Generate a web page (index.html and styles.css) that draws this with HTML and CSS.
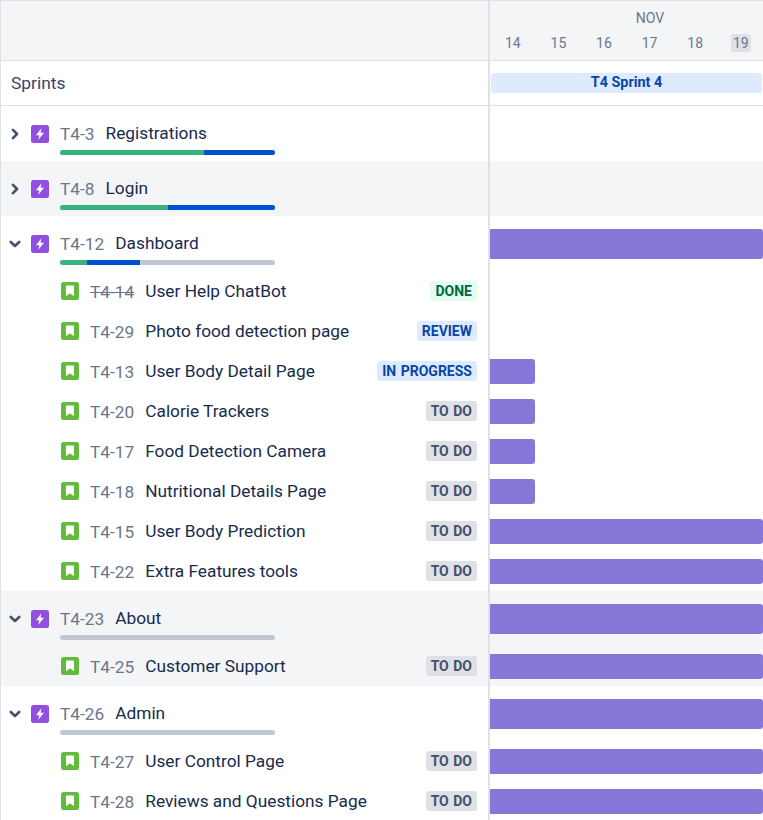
FILE: index.html
```html
<!DOCTYPE html>
<html lang="en">
<head>
  <meta charset="UTF-8">
  <title>Roadmap</title>
  <link rel="stylesheet" href="styles.css">
</head>
<body>
  <svg class="defs" width="0" height="0">
    <symbol id="epic" viewBox="0 0 18 18">
      <rect width="18" height="18" rx="2.5" fill="#904ee2"/>
      <path d="M10.4 3.2 5 10.2h3.2l-.9 4.6L13 7.8H9.6z" fill="#fff"/>
    </symbol>
    <symbol id="story" viewBox="0 0 18 18">
      <rect width="18" height="18" rx="2.5" fill="#63ba3c"/>
      <path d="M5 4.2c0-.4.3-.7.7-.7h6.6c.4 0 .7.3.7.7v10l-4-3-4 3z" fill="#fff"/>
    </symbol>
    <symbol id="open" viewBox="0 0 12 12">
      <path d="M1.8 4 6 8l4.2-4" fill="none" stroke="#42526e" stroke-width="2.6" stroke-linecap="round" stroke-linejoin="round"/>
    </symbol>
    <symbol id="closed" viewBox="0 0 12 12">
      <path d="M4 1.8 8 6l-4 4.2" fill="none" stroke="#42526e" stroke-width="2.6" stroke-linecap="round" stroke-linejoin="round"/>
    </symbol>
  </svg>

  <div class="chart">
    <!-- header -->
    <div class="row head">
      <div class="left"></div>
      <div class="right timeline">
        <div class="month">NOV</div>
        <div class="days">
          <span>14</span><span>15</span><span>16</span><span>17</span><span>18</span><span class="today">19</span>
        </div>
      </div>
    </div>

    <div class="row sprints">
      <div class="left sprints-label">Sprints</div>
      <div class="right"><div class="sprint">T4 Sprint 4</div></div>
    </div>

    <!-- epics and stories -->
    <div class="row epic">
      <div class="left">
        <svg class="toggle"><use href="#closed"/></svg>
        <svg class="icon"><use href="#epic"/></svg>
        <div class="epic-main">
          <div class="line"><span class="key">T4-3</span><span class="title">Registrations</span></div>
          <div class="progress"><i class="green w144"></i><i class="blue fill"></i></div>
        </div>
      </div>
      <div class="right"></div>
    </div>

    <div class="row epic shade">
      <div class="left">
        <svg class="toggle"><use href="#closed"/></svg>
        <svg class="icon"><use href="#epic"/></svg>
        <div class="epic-main">
          <div class="line"><span class="key">T4-8</span><span class="title">Login</span></div>
          <div class="progress"><i class="green w108"></i><i class="blue fill"></i></div>
        </div>
      </div>
      <div class="right"></div>
    </div>

    <div class="row epic">
      <div class="left">
        <svg class="toggle"><use href="#open"/></svg>
        <svg class="icon"><use href="#epic"/></svg>
        <div class="epic-main">
          <div class="line"><span class="key">T4-12</span><span class="title">Dashboard</span></div>
          <div class="progress"><i class="green w27"></i><i class="blue w53"></i></div>
        </div>
      </div>
      <div class="right"><div class="bar"></div></div>
    </div>

    <div class="row story">
      <div class="left">
        <svg class="icon"><use href="#story"/></svg>
        <span class="key done-key">T4-14</span><span class="title">User Help ChatBot</span>
        <span class="status done">DONE</span>
      </div>
      <div class="right"></div>
    </div>

    <div class="row story">
      <div class="left">
        <svg class="icon"><use href="#story"/></svg>
        <span class="key">T4-29</span><span class="title">Photo food detection page</span>
        <span class="status blue-s">REVIEW</span>
      </div>
      <div class="right"></div>
    </div>

    <div class="row story">
      <div class="left">
        <svg class="icon"><use href="#story"/></svg>
        <span class="key">T4-13</span><span class="title">User Body Detail Page</span>
        <span class="status blue-s">IN PROGRESS</span>
      </div>
      <div class="right"><div class="bar short"></div></div>
    </div>

    <div class="row story">
      <div class="left">
        <svg class="icon"><use href="#story"/></svg>
        <span class="key">T4-20</span><span class="title">Calorie Trackers</span>
        <span class="status">TO DO</span>
      </div>
      <div class="right"><div class="bar short"></div></div>
    </div>

    <div class="row story">
      <div class="left">
        <svg class="icon"><use href="#story"/></svg>
        <span class="key">T4-17</span><span class="title">Food Detection Camera</span>
        <span class="status">TO DO</span>
      </div>
      <div class="right"><div class="bar short"></div></div>
    </div>

    <div class="row story">
      <div class="left">
        <svg class="icon"><use href="#story"/></svg>
        <span class="key">T4-18</span><span class="title">Nutritional Details Page</span>
        <span class="status">TO DO</span>
      </div>
      <div class="right"><div class="bar short"></div></div>
    </div>

    <div class="row story">
      <div class="left">
        <svg class="icon"><use href="#story"/></svg>
        <span class="key">T4-15</span><span class="title">User Body Prediction</span>
        <span class="status">TO DO</span>
      </div>
      <div class="right"><div class="bar"></div></div>
    </div>

    <div class="row story">
      <div class="left">
        <svg class="icon"><use href="#story"/></svg>
        <span class="key">T4-22</span><span class="title">Extra Features tools</span>
        <span class="status">TO DO</span>
      </div>
      <div class="right"><div class="bar"></div></div>
    </div>

    <div class="row epic shade">
      <div class="left">
        <svg class="toggle"><use href="#open"/></svg>
        <svg class="icon"><use href="#epic"/></svg>
        <div class="epic-main">
          <div class="line"><span class="key">T4-23</span><span class="title">About</span></div>
          <div class="progress"></div>
        </div>
      </div>
      <div class="right"><div class="bar"></div></div>
    </div>

    <div class="row story shade">
      <div class="left">
        <svg class="icon"><use href="#story"/></svg>
        <span class="key">T4-25</span><span class="title">Customer Support</span>
        <span class="status">TO DO</span>
      </div>
      <div class="right"><div class="bar"></div></div>
    </div>

    <div class="row epic">
      <div class="left">
        <svg class="toggle"><use href="#open"/></svg>
        <svg class="icon"><use href="#epic"/></svg>
        <div class="epic-main">
          <div class="line"><span class="key">T4-26</span><span class="title">Admin</span></div>
          <div class="progress"></div>
        </div>
      </div>
      <div class="right"><div class="bar"></div></div>
    </div>

    <div class="row story">
      <div class="left">
        <svg class="icon"><use href="#story"/></svg>
        <span class="key">T4-27</span><span class="title">User Control Page</span>
        <span class="status">TO DO</span>
      </div>
      <div class="right"><div class="bar"></div></div>
    </div>

    <div class="row story">
      <div class="left">
        <svg class="icon"><use href="#story"/></svg>
        <span class="key">T4-28</span><span class="title">Reviews and Questions Page</span>
        <span class="status">TO DO</span>
      </div>
      <div class="right"><div class="bar"></div></div>
    </div>
  </div>
</body>
</html>
```

FILE: styles.css
```css
html, body {
  margin: 0;
  height: 820px;
  overflow: hidden;
  background: #fff;
}

body {
  font-family: Roboto, "Open Sans", Arial, sans-serif;
  color: #172b4d;
}

.defs {
  display: block;
  height: 0;
}

.chart {
  border-top: 1px solid #dfe1e6;
  border-left: 1px solid #dfe1e6;
}

.row {
  display: flex;
}

.left {
  width: 487px;
  flex: none;
  display: flex;
  align-items: center;
  box-sizing: content-box;
  border-right: 2px solid #dfe1e6;
}

.right {
  flex: 1;
  min-width: 0;
}

.head {
  height: 59px;
  background: #f4f5f7;
  border-bottom: 1px solid #dfe1e6;
}

.timeline {
  color: #6b778c;
  font-size: 14px;
}

.month {
  text-align: center;
  padding-top: 7px;
  height: 20px;
  line-height: 20px;
  padding-left: 47px;
  margin-bottom: 6px;
}

.days {
  display: flex;
}

.days span {
  width: 45.6px;
  height: 18px;
  text-align: center;
  line-height: 19px;
}

.days .today {
  width: 20px;
  margin-left: 12.8px;
  background: #dfe1e6;
  border-radius: 3px;
}

.sprints {
  height: 44px;
  border-bottom: 1px solid #dfe1e6;
}

.sprints-label {
  padding-left: 10px;
  width: 477px;
  font-size: 17.4px;
  color: #344563;
}

.sprint {
  margin: 12px 1px 0;
  height: 20px;
  line-height: 20px;
  text-align: center;
  background: #deebff;
  border-radius: 3px;
  color: #0747a6;
  font-size: 14.4px;
  font-weight: 700;
}

.epic {
  height: 55px;
}

.story {
  height: 40px;
}

.shade {
  background: #f4f5f7;
}

.toggle {
  width: 12px;
  height: 12px;
  margin-left: 8px;
  margin-right: 10px;
  flex: none;
}

.icon {
  width: 18px;
  height: 18px;
  flex: none;
}

.epic .icon {
  margin-right: 11px;
}

.story .icon {
  margin-left: 60px;
  margin-right: 11px;
}

.epic-main {
  width: 215px;
  align-self: flex-start;
  padding-top: 15px;
  white-space: nowrap;
}

.line {
  display: flex;
  align-items: center;
  height: 24px;
}

.key {
  color: #6b778c;
  font-size: 17.3px;
  margin-right: 11px;
  position: relative;
  top: 1px;
}

.done-key {
  text-decoration: line-through;
}

.title {
  font-size: 17.3px;
  color: #172b4d;
}

.progress {
  display: flex;
  height: 5px;
  margin-top: 5px;
  border-radius: 3px;
  overflow: hidden;
  background: #c1c7d0;
}

.progress i {
  display: block;
}

.green {
  background: #36b37e;
}

.blue {
  background: #0052cc;
}

.fill {
  flex: 1;
}

.w144 { width: 144px; }
.w108 { width: 108px; }
.w27 { width: 27px; }
.w53 { width: 53px; }

.status {
  margin-left: auto;
  margin-right: 11px;
  padding: 0 5px;
  height: 20px;
  line-height: 20px;
  border-radius: 3px;
  font-size: 14px;
  font-weight: 700;
  word-spacing: 1px;
  background: #dfe1e6;
  color: #42526e;
}

.status.done {
  background: #e3fcef;
  color: #006644;
}

.status.blue-s {
  background: #deebff;
  color: #0747a6;
}

.bar {
  background: #8777d9;
  border-radius: 0 3px 3px 0;
}

.epic .bar {
  height: 30px;
  margin-top: 13px;
}

.story .bar {
  height: 25px;
  margin-top: 8px;
}

.story .bar.short {
  width: 45px;
}
```
